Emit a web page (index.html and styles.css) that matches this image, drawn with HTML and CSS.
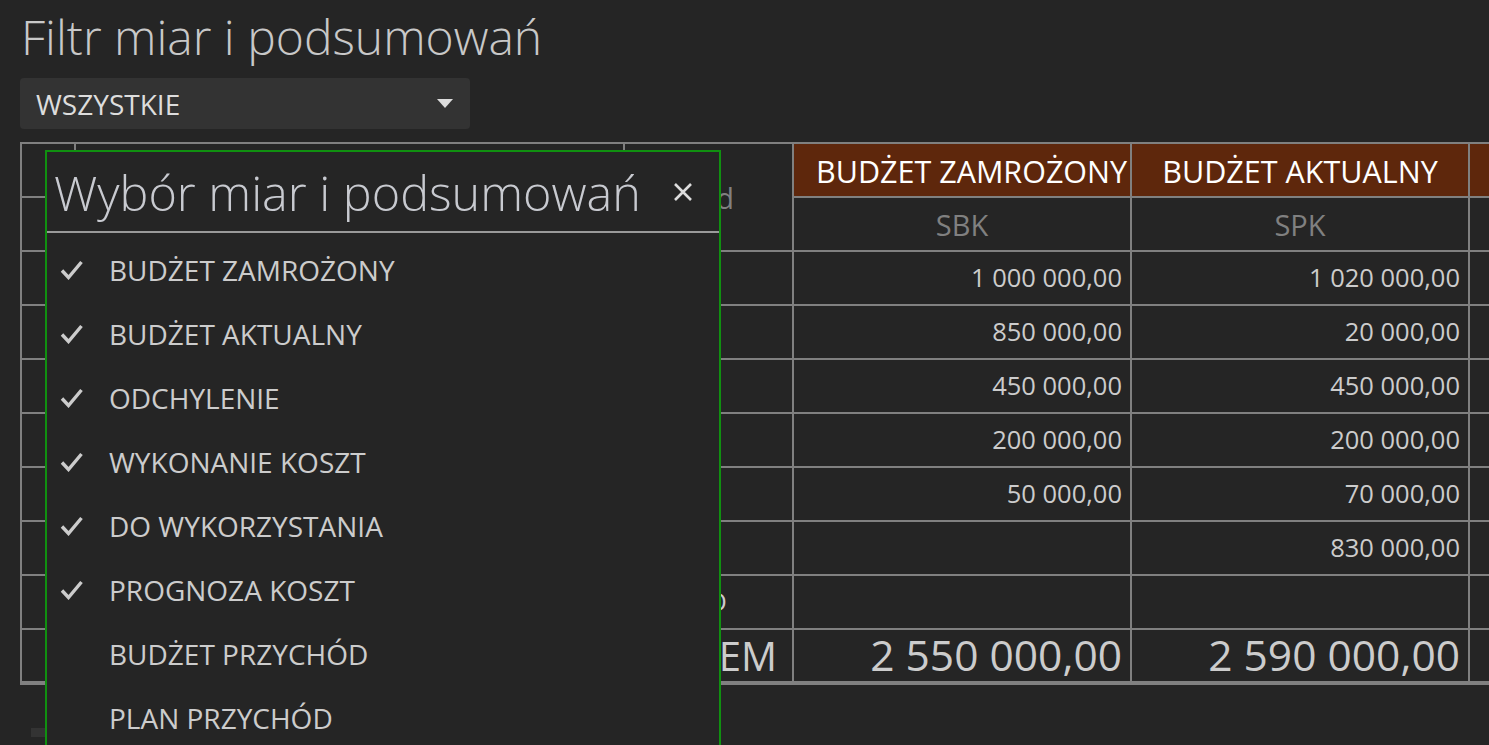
FILE: index.html
```html
<!DOCTYPE html>
<html lang="pl">
<head>
  <meta charset="UTF-8">
  <meta name="viewport" content="width=device-width, initial-scale=1.0">
  <title>Filtr miar i podsumowań</title>
  <link rel="stylesheet" href="styles.css">
</head>
<body>
  <div class="page">
    <h1 class="page-title">Filtr miar i podsumowań</h1>

    <div class="select">
      <span>WSZYSTKIE</span>
      <span class="select-arrow"></span>
    </div>

    <div class="table-wrap">
      <table class="summary">
        <colgroup>
          <col class="c-num">
          <col class="c-name">
          <col class="c-code">
          <col class="c-val">
          <col class="c-val">
          <col class="c-val">
        </colgroup>
        <thead>
          <tr>
            <th></th>
            <th rowspan="2"></th>
            <th rowspan="2" class="sub code-head">Kod</th>
            <th class="measure">BUDŻET ZAMROŻONY</th>
            <th class="measure">BUDŻET AKTUALNY</th>
            <th class="measure">ODCHYLENIE</th>
          </tr>
          <tr>
            <th></th>
            <th class="sub">SBK</th>
            <th class="sub">SPK</th>
            <th class="sub">ODCH</th>
          </tr>
        </thead>
        <tbody>
          <tr><td></td><td></td><td></td><td>1 000 000,00</td><td>1 020 000,00</td><td></td></tr>
          <tr><td></td><td></td><td></td><td>850 000,00</td><td>20 000,00</td><td></td></tr>
          <tr><td></td><td></td><td></td><td>450 000,00</td><td>450 000,00</td><td></td></tr>
          <tr><td></td><td></td><td></td><td>200 000,00</td><td>200 000,00</td><td></td></tr>
          <tr><td></td><td></td><td></td><td>50 000,00</td><td>70 000,00</td><td></td></tr>
          <tr><td></td><td></td><td></td><td></td><td>830 000,00</td><td></td></tr>
          <tr><td></td><td></td><td class="label">SALDO</td><td></td><td></td><td></td></tr>
          <tr class="total"><td></td><td></td><td class="label">RAZEM</td><td>2 550 000,00</td><td>2 590 000,00</td><td></td></tr>
        </tbody>
      </table>

      <div class="picker">
        <div class="picker-head">
          <span class="picker-title">Wybór miar i podsumowań</span>
          <svg class="picker-close" width="22" height="22" viewBox="0 0 22 22">
            <path d="M3 3 L19 19 M19 3 L3 19" stroke="#dddddd" stroke-width="2.6" fill="none"/>
          </svg>
        </div>
        <ul class="picker-list">
          <li><svg class="tick" width="24" height="20" viewBox="0 0 24 20"><path d="M2 10.5 L8.5 17.5 L21.5 2" stroke="#cccccc" stroke-width="3.4" fill="none"/></svg>BUDŻET ZAMROŻONY</li>
          <li><svg class="tick" width="24" height="20" viewBox="0 0 24 20"><path d="M2 10.5 L8.5 17.5 L21.5 2" stroke="#cccccc" stroke-width="3.4" fill="none"/></svg>BUDŻET AKTUALNY</li>
          <li><svg class="tick" width="24" height="20" viewBox="0 0 24 20"><path d="M2 10.5 L8.5 17.5 L21.5 2" stroke="#cccccc" stroke-width="3.4" fill="none"/></svg>ODCHYLENIE</li>
          <li><svg class="tick" width="24" height="20" viewBox="0 0 24 20"><path d="M2 10.5 L8.5 17.5 L21.5 2" stroke="#cccccc" stroke-width="3.4" fill="none"/></svg>WYKONANIE KOSZT</li>
          <li><svg class="tick" width="24" height="20" viewBox="0 0 24 20"><path d="M2 10.5 L8.5 17.5 L21.5 2" stroke="#cccccc" stroke-width="3.4" fill="none"/></svg>DO WYKORZYSTANIA</li>
          <li><svg class="tick" width="24" height="20" viewBox="0 0 24 20"><path d="M2 10.5 L8.5 17.5 L21.5 2" stroke="#cccccc" stroke-width="3.4" fill="none"/></svg>PROGNOZA KOSZT</li>
          <li>BUDŻET PRZYCHÓD</li>
          <li>PLAN PRZYCHÓD</li>
        </ul>
      </div>
    </div>

    <div class="scroll-thumb"></div>
  </div>
</body>
</html>
```

FILE: styles.css
```css
html, body {
  margin: 0;
  height: 100%;
  overflow: hidden;
  background-color: #252525;
}

body {
  font-family: "Open Sans", "Noto Sans", sans-serif;
  color: #cccccc;
}

.page {
  padding: 5px 0 0 20px;
}

.page-title {
  margin: 0 0 0 1px;
  font-size: 48px;
  font-weight: 300;
  line-height: 64px;
  color: #c8c8c8;
}

.select {
  display: flex;
  align-items: center;
  justify-content: space-between;
  box-sizing: border-box;
  width: 450px;
  height: 51px;
  margin-top: 9px;
  padding: 0 17px 0 16px;
  background-color: #333333;
  border-radius: 4px;
  font-size: 28px;
  color: #dddddd;
}

.select-arrow {
  width: 0;
  height: 0;
  border-left: 8px solid transparent;
  border-right: 8px solid transparent;
  border-top: 9px solid #dddddd;
}

.table-wrap {
  position: relative;
  margin-top: 13px;
}

.summary {
  border-collapse: collapse;
  table-layout: fixed;
  width: 1650px;
}

.c-num { width: 54px; }
.c-name { width: 549px; }
.c-code { width: 169px; }
.c-val { width: 338px; }

.summary th,
.summary td {
  border: 2px solid #808080;
  height: 54px;
  padding: 0 8px;
  box-sizing: border-box;
  font-weight: 400;
  line-height: 1;
  white-space: nowrap;
  overflow: hidden;
}

.summary td {
  text-align: right;
  font-size: 25.5px;
  color: #cccccc;
}

.summary th.measure {
  padding: 3px 22px 0;
  background-color: #5e270c;
  color: #ffffff;
  font-size: 30.5px;
  text-align: center;
}

.summary th.sub {
  color: #808080;
  font-size: 29px;
  text-align: center;
}

.summary th.code-head {
  text-align: right;
  padding-right: 58px;
}

.summary td.label {
  text-align: left;
  padding-left: 20px;
}

.summary tr.total td {
  font-size: 42.5px;
  border-bottom-width: 4px;
}

.summary tr.total td.label {
  text-align: right;
  padding: 0 15px 0 0;
  font-size: 40px;
}

.picker {
  position: absolute;
  left: 25px;
  top: 8px;
  width: 676px;
  height: 640px;
  box-sizing: border-box;
  border: 2px solid #109010;
  background-color: #252525;
}

.picker-head {
  display: flex;
  align-items: center;
  justify-content: space-between;
  height: 79px;
  padding: 0 25px 0 7px;
  border-bottom: 2px solid #9a9a9a;
}

.picker-title {
  font-size: 48.5px;
  font-weight: 300;
  color: #c8cad0;
}

.picker-list {
  list-style: none;
  margin: 0;
  padding: 5px 0 0 62px;
}

.picker-list li {
  position: relative;
  height: 64px;
  line-height: 64px;
  font-size: 28px;
  color: #cccccc;
}

.picker-list .tick {
  position: absolute;
  left: -49px;
  top: 22px;
}

.scroll-thumb {
  width: 40px;
  height: 9px;
  margin: 43px 0 0 11px;
  background-color: #333333;
}
```
